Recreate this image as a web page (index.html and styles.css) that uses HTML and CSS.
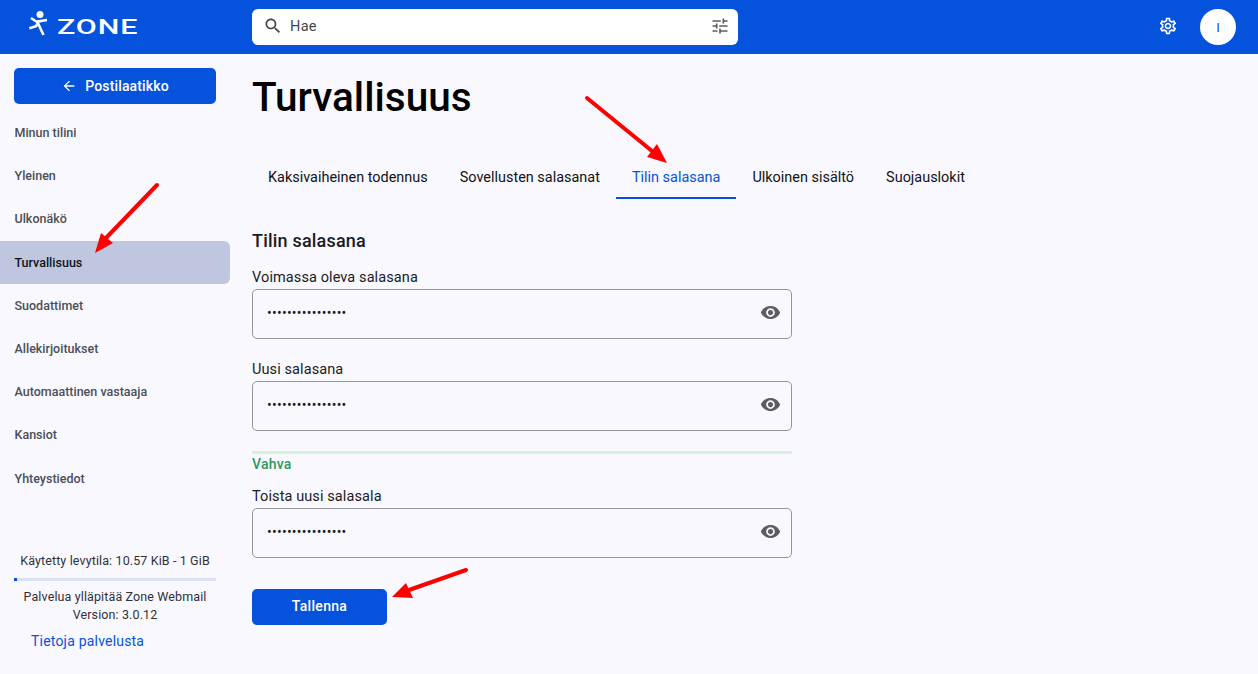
FILE: index.html
```html
<!DOCTYPE html>
<html lang="fi">
<head>
<meta charset="utf-8">
<title>Turvallisuus</title>
<link rel="stylesheet" href="styles.css">
</head>
<body>
<header class="topbar">
  <div class="brand">
    <svg class="brand-mark" viewBox="0 0 21 26" aria-hidden="true">
      <circle cx="12" cy="3.6" r="3.5" fill="#fff"/>
      <path d="M3 7 9 11 M9 10.6 19 9 M9 10 15.5 24 M1.3 17.2 8 15.2 10 12" fill="none" stroke="#fff" stroke-width="2.6"/>
    </svg>
    <span class="brand-name">ZONE</span>
  </div>
  <div class="search">
    <svg class="icon search-icon" viewBox="0 0 24 24"><path d="M15.5 14h-.79l-.28-.27C15.41 12.59 16 11.11 16 9.5 16 5.91 13.09 3 9.5 3S3 5.91 3 9.5 5.91 16 9.5 16c1.61 0 3.09-.59 4.23-1.57l.27.28v.79l5 4.99L20.49 19l-4.99-5zm-6 0C7.01 14 5 11.99 5 9.5S7.01 5 9.5 5 14 7.01 14 9.5 11.99 14 9.5 14z"/></svg>
    <input class="search-input" type="text" placeholder="Hae">
    <svg class="icon tune-icon" viewBox="0 0 24 24"><path d="M3 17v2h6v-2H3zM3 5v2h10V5H3zm10 16v-2h8v-2h-8v-2h-2v6h2zM7 9v2H3v2h4v2h2V9H7zm14 4v-2H11v2h10zm-6-4h2V7h4V5h-4V3h-2v6z"/></svg>
  </div>
  <div class="top-actions">
    <svg class="icon gear-icon" viewBox="0 0 24 24"><path d="M19.43 12.98c.04-.32.07-.64.07-.98 0-.34-.03-.66-.07-.98l2.11-1.65c.19-.15.24-.42.12-.64l-2-3.46c-.09-.16-.26-.25-.44-.25-.06 0-.12.01-.17.03l-2.49 1c-.52-.4-1.08-.73-1.69-.98l-.38-2.65C14.46 2.18 14.25 2 14 2h-4c-.25 0-.46.18-.49.42l-.38 2.65c-.61.25-1.17.59-1.69.98l-2.49-1c-.06-.02-.12-.03-.18-.03-.17 0-.34.09-.43.25l-2 3.46c-.13.22-.07.49.12.64l2.11 1.65c-.04.32-.07.65-.07.98 0 .33.03.66.07.98l-2.11 1.65c-.19.15-.24.42-.12.64l2 3.46c.09.16.26.25.44.25.06 0 .12-.01.17-.03l2.49-1c.52.4 1.08.73 1.69.98l.38 2.65c.03.24.24.42.49.42h4c.25 0 .46-.18.49-.42l.38-2.65c.61-.25 1.17-.59 1.69-.98l2.49 1c.06.02.12.03.18.03.17 0 .34-.09.43-.25l2-3.46c.12-.22.07-.49-.12-.64l-2.11-1.65zm-1.98-1.71c.04.31.05.52.05.73 0 .21-.02.43-.05.73l-.14 1.13.89.7 1.08.84-.7 1.21-1.27-.51-1.04-.42-.9.68c-.43.32-.84.56-1.25.73l-1.06.43-.16 1.13-.2 1.35h-1.4l-.19-1.35-.16-1.13-1.06-.43c-.43-.18-.83-.41-1.23-.71l-.91-.7-1.06.43-1.27.51-.7-1.21 1.08-.84.89-.7-.14-1.13c-.03-.31-.05-.54-.05-.74s.02-.43.05-.73l.14-1.13-.89-.7-1.08-.84.7-1.21 1.27.51 1.04.42.9-.68c.43-.32.84-.56 1.25-.73l1.06-.43.16-1.13.2-1.35h1.39l.19 1.35.16 1.13 1.06.43c.43.18.83.41 1.23.71l.91.7 1.06-.43 1.27-.51.7 1.21-1.07.85-.89.7.14 1.13zM12 8c-2.21 0-4 1.79-4 4s1.79 4 4 4 4-1.79 4-4-1.79-4-4-4zm0 6c-1.1 0-2-.9-2-2s.9-2 2-2 2 .9 2 2-.9 2-2 2z"/></svg>
    <div class="avatar">I</div>
  </div>
</header>
<div class="layout">
  <aside class="sidebar">
    <div class="side-top">
      <button class="back-btn" type="button">
        <svg class="icon back-icon" viewBox="0 0 24 24"><path d="M20 11H7.83l5.59-5.59L12 4l-8 8 8 8 1.41-1.41L7.83 13H20v-2z"/></svg>
        Postilaatikko
      </button>
      <nav class="side-nav">
        <a class="side-link">Minun tilini</a>
        <a class="side-link">Yleinen</a>
        <a class="side-link">Ulkonäkö</a>
        <a class="side-link active">Turvallisuus</a>
        <a class="side-link">Suodattimet</a>
        <a class="side-link">Allekirjoitukset</a>
        <a class="side-link">Automaattinen vastaaja</a>
        <a class="side-link">Kansiot</a>
        <a class="side-link">Yhteystiedot</a>
      </nav>
    </div>
    <div class="side-foot">
      <div class="quota-text">Käytetty levytila: 10.57 KiB - 1 GiB</div>
      <div class="quota-bar"><div class="quota-fill"></div></div>
      <div class="foot-note">Palvelua ylläpitää Zone Webmail</div>
      <div class="foot-note">Version: 3.0.12</div>
      <a class="about-link">Tietoja palvelusta</a>
    </div>
  </aside>
  <main class="content">
    <h1 class="page-title">Turvallisuus</h1>
    <div class="tabs">
      <a class="tab">Kaksivaiheinen todennus</a>
      <a class="tab">Sovellusten salasanat</a>
      <a class="tab active">Tilin salasana</a>
      <a class="tab">Ulkoinen sisältö</a>
      <a class="tab">Suojauslokit</a>
    </div>
    <h2 class="section-title">Tilin salasana</h2>
    <form class="pw-form">
      <label class="field-label">Voimassa oleva salasana</label>
      <div class="field">
        <input class="pw-input" type="password" value="aaaaaaaaaaaaaaaa">
        <svg class="icon eye-icon" viewBox="0 0 24 24"><path d="M12 4.5C7 4.5 2.73 7.61 1 12c1.73 4.39 6 7.5 11 7.5s9.27-3.11 11-7.5c-1.73-4.39-6-7.5-11-7.5zM12 17c-2.76 0-5-2.24-5-5s2.24-5 5-5 5 2.24 5 5-2.24 5-5 5zm0-8c-1.66 0-3 1.34-3 3s1.34 3 3 3 3-1.34 3-3-1.34-3-3-3z"/></svg>
      </div>
      <label class="field-label next">Uusi salasana</label>
      <div class="field">
        <input class="pw-input" type="password" value="aaaaaaaaaaaaaaaa">
        <svg class="icon eye-icon" viewBox="0 0 24 24"><path d="M12 4.5C7 4.5 2.73 7.61 1 12c1.73 4.39 6 7.5 11 7.5s9.27-3.11 11-7.5c-1.73-4.39-6-7.5-11-7.5zM12 17c-2.76 0-5-2.24-5-5s2.24-5 5-5 5 2.24 5 5-2.24 5-5 5zm0-8c-1.66 0-3 1.34-3 3s1.34 3 3 3 3-1.34 3-3-1.34-3-3-3z"/></svg>
      </div>
      <div class="strength-bar"></div>
      <div class="strength-text">Vahva</div>
      <label class="field-label after-strength">Toista uusi salasala</label>
      <div class="field">
        <input class="pw-input" type="password" value="aaaaaaaaaaaaaaaa">
        <svg class="icon eye-icon" viewBox="0 0 24 24"><path d="M12 4.5C7 4.5 2.73 7.61 1 12c1.73 4.39 6 7.5 11 7.5s9.27-3.11 11-7.5c-1.73-4.39-6-7.5-11-7.5zM12 17c-2.76 0-5-2.24-5-5s2.24-5 5-5 5 2.24 5 5-2.24 5-5 5zm0-8c-1.66 0-3 1.34-3 3s1.34 3 3 3 3-1.34 3-3-1.34-3-3-3z"/></svg>
      </div>
      <button class="save-btn" type="button">Tallenna</button>
    </form>
  </main>
</div>
<svg class="arrows" viewBox="0 0 1258 674" aria-hidden="true">
  <g class="arrow-line">
    <line x1="587" y1="98" x2="652" y2="151"/>
    <line x1="157" y1="185" x2="106" y2="238"/>
    <line x1="466" y1="570" x2="409" y2="590"/>
  </g>
  <g class="arrow-head">
    <polygon points="667,163 647,157 657,144"/>
    <polygon points="95,253 101,233 113,243"/>
    <polygon points="392,597 406,583 413,598"/>
  </g>
</svg>
</body>
</html>
```
FILE: styles.css
```css
* { box-sizing: border-box; }
html, body { margin: 0; height: 100%; }
body {
  position: relative;
  width: 1258px;
  height: 674px;
  overflow: hidden;
  background: #f9f8fe;
  color: #1b1b1f;
  font-family: Roboto, "Liberation Sans", sans-serif;
  font-size: 14px;
}
.icon { display: block; flex: none; }

.topbar {
  height: 54px;
  background: #0553dd;
  display: flex;
  align-items: center;
}
.brand {
  width: 252px;
  padding-left: 28px;
  display: flex;
  align-items: center;
  gap: 8px;
}
.brand-mark { width: 21px; height: 26px; margin-bottom: 6px; }
.brand-name {
  color: #fff;
  font-family: Roboto, sans-serif;
  font-weight: 500;
  font-size: 21px;
  line-height: 20px;
  letter-spacing: .6px;
  margin-bottom: 1px;
  transform: scaleX(1.45);
  transform-origin: left center;
}
.search {
  width: 486px;
  height: 36px;
  background: #fff;
  border-radius: 6px;
  display: flex;
  align-items: center;
  padding: 0 8px 0 11px;
}
.search-icon { width: 20px; height: 20px; fill: #44464f; margin-bottom: 2px; }
.search-input {
  flex: 1;
  min-width: 0;
  border: 0;
  outline: 0;
  background: transparent;
  padding: 0 0 2px 7px;
  font: 14.5px Roboto, sans-serif;
  letter-spacing: .3px;
}
.search-input::placeholder { color: #44464f; opacity: 1; }
.tune-icon { width: 20px; height: 20px; fill: #5a5c63; margin-bottom: 2px; }
.top-actions {
  margin-left: auto;
  padding-right: 22px;
  display: flex;
  align-items: center;
  gap: 22px;
}
.gear-icon { width: 20px; height: 20px; fill: #fff; margin-bottom: 2px; }
.avatar {
  width: 36px;
  height: 36px;
  border-radius: 50%;
  background: #fff;
  color: #0553dd;
  display: flex;
  align-items: center;
  justify-content: center;
  font-size: 13px;
}

.layout { display: flex; height: 620px; }
.sidebar {
  width: 252px;
  flex: none;
  display: flex;
  flex-direction: column;
  justify-content: space-between;
  padding: 14px 22px 23px 0;
}
.back-btn {
  margin-left: 14px;
  width: 202px;
  height: 36px;
  border: 0;
  border-radius: 5px;
  background: #0553dd;
  color: #fff;
  font: 500 14px Roboto, sans-serif;
  letter-spacing: .15px;
  display: flex;
  align-items: center;
  justify-content: center;
  gap: 8px;
}
.back-icon { width: 16px; height: 16px; fill: #fff; }
.side-nav { margin-top: 7px; display: flex; flex-direction: column; }
.side-link {
  height: 43.2px;
  display: flex;
  align-items: center;
  padding-left: 14.5px;
  border-radius: 0 6px 6px 0;
  font-size: 12.5px;
  font-weight: 500;
  color: #4c4e57;
}
.side-link.active { background: #bfc6e0; color: #11131a; }
.side-foot { display: flex; flex-direction: column; align-items: center; }
.quota-text { font-size: 12.5px; color: #303138; line-height: 16px; letter-spacing: .12px; }
.quota-bar {
  align-self: flex-start;
  width: 202px;
  margin: 9px 0 0 14px;
  height: 3px;
  background: #dde1f5;
}
.quota-fill { width: 3px; height: 3px; background: #0553dd; }
.foot-note { font-size: 12.5px; line-height: 18px; color: #303138; letter-spacing: .12px; }
.quota-bar + .foot-note { margin-top: 7px; }
.about-link {
  align-self: flex-start;
  margin-left: 31px;
  margin-top: 7px;
  font-size: 14px;
  line-height: 20px;
  color: #0553dd;
  letter-spacing: .2px;
}

.content { flex: 1; min-width: 0; }
.page-title {
  margin: 19px 0 0;
  font-size: 40.5px;
  line-height: 48px;
  font-weight: 500;
  color: #000;
}
.tabs { display: flex; margin-top: 37px; height: 41px; }
.tab {
  display: flex;
  align-items: center;
  padding: 0 16px;
  height: 41px;
  font-size: 14.45px;
  color: #111216;
  border-bottom: 2px solid transparent;
}
.tab.active { color: #0553dd; border-bottom-color: #0553dd; }
.section-title {
  margin: 30px 0 0;
  font-size: 18px;
  line-height: 24px;
  font-weight: 500;
  color: #1b1b1f;
  letter-spacing: .2px;
}
.pw-form { width: 540px; display: flex; flex-direction: column; align-items: flex-start; margin-top: 15px; }
.field-label { font-size: 14.5px; line-height: 20px; letter-spacing: .1px; color: #1b1b1f; margin-bottom: 1px; }
.field-label.next { margin-top: 21px; }
.field-label.after-strength { margin-top: 13px; }
.field {
  width: 540px;
  height: 50px;
  border: 1px solid #96959b;
  border-radius: 5px;
  display: flex;
  align-items: center;
  padding: 0 10px 0 14px;
}
.pw-input {
  flex: 1;
  min-width: 0;
  border: 0;
  outline: 0;
  background: transparent;
  padding: 0 0 2px;
  font: 14px Roboto, sans-serif;
  letter-spacing: .25px;
  color: #1b1b1f;
}
.eye-icon { width: 21px; height: 21px; fill: #5c5d62; margin-bottom: 3px; }
.strength-bar { width: 540px; height: 3px; margin-top: 20px; background: #d8f0df; }
.strength-text { font-size: 14px; line-height: 20px; font-weight: 500; color: #2b9a5a; letter-spacing: .2px; }
.save-btn {
  margin-top: 31px;
  width: 135px;
  height: 36px;
  padding: 0 0 2px;
  border: 0;
  border-radius: 5px;
  background: #0553dd;
  color: #fff;
  font: 500 14px Roboto, sans-serif;
  letter-spacing: .3px;
}

.arrows { position: absolute; left: 0; top: 0; width: 1258px; height: 674px; pointer-events: none; }
.arrow-line line { stroke: #fe0000; stroke-width: 4; stroke-linecap: round; }
.arrow-head polygon { fill: #fe0000; }
```
